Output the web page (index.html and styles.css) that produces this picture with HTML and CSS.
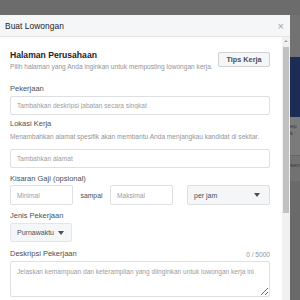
FILE: index.html
```html
<!DOCTYPE html>
<html lang="id">
<head>
<meta charset="utf-8">
<title>Buat Lowongan</title>
<link rel="stylesheet" href="styles.css">
</head>
<body>
<div class="page">
  <div class="topband"></div>
  <div class="main">
    <div class="modal">
      <div class="header">
        <span class="header-title">Buat Lowongan</span>
        <span class="close">×</span>
      </div>
      <div class="body">
        <div class="content">
          <div class="title-row">
            <div class="title-block">
              <div class="title">Halaman Perusahaan</div>
              <div class="subtitle">Pilih halaman yang Anda inginkan untuk memposting lowongan kerja.</div>
            </div>
            <div class="tips-btn">Tips Kerja</div>
          </div>

          <div class="label first">Pekerjaan</div>
          <input class="field" type="text" placeholder="Tambahkan deskripsi jabatan secara singkat">

          <div class="label after-field">Lokasi Kerja</div>
          <div class="hint">Menambahkan alamat spesifik akan membantu Anda menjangkau kandidat di sekitar.</div>
          <input class="field field-loc" type="text" placeholder="Tambahkan alamat">

          <div class="label after-field2">Kisaran Gaji (opsional)</div>
          <div class="salary-row">
            <input class="field small" type="text" placeholder="Minimal">
            <span class="sampai">sampai</span>
            <input class="field small" type="text" placeholder="Maksimal">
            <div class="select">
              <span>per jam</span>
              <span class="caret"></span>
            </div>
          </div>

          <div class="label after-row">Jenis Pekerjaan</div>
          <div class="dropdown-btn">
            <span>Purnawaktu</span>
            <span class="caret"></span>
          </div>

          <div class="desc-head">
            <span class="label-inline">Deskripsi Pekerjaan</span>
            <span class="counter">0 / 5000</span>
          </div>
          <textarea class="textarea" placeholder="Jelaskan kemampuan dan keterampilan yang diinginkan untuk lowongan kerja ini"></textarea>
        </div>
        <div class="scrollbar">
          <div class="sb-arrow"></div>
          <div class="sb-thumb"></div>
        </div>
      </div>
    </div>
    <div class="strip">
      <div class="strip-top"></div>
      <div class="strip-blue"></div>
      <div class="strip-text">
        <span>ep</span>
        <span>k</span>
      </div>
      <div class="strip-mid"><span>sem</span></div>
      <div class="strip-bottom"></div>
    </div>
  </div>
</div>
</body>
</html>
```

FILE: styles.css
```css
* { box-sizing: border-box; }

html, body {
  margin: 0;
  padding: 0;
  width: 300px;
  height: 300px;
  overflow: hidden;
  background: #6d6d6d;
  font-family: "Liberation Sans", Arial, sans-serif;
}

.page {
  display: flex;
  flex-direction: column;
  width: 300px;
  height: 300px;
}

.topband {
  height: 15px;
  flex: none;
  background: #6c6c6c;
}

.main {
  display: flex;
  flex: 1;
  min-height: 0;
}

.modal {
  width: 290px;
  flex: none;
  display: flex;
  flex-direction: column;
  background: #ffffff;
}

.header {
  height: 22px;
  flex: none;
  display: flex;
  align-items: center;
  justify-content: space-between;
  padding: 0 6px 0 5px;
  background: #f5f6f7;
  border-bottom: 1px solid #e5e5e5;
}

.header-title {
  font-size: 8.4px;
  color: #1d2129;
  font-weight: 400;
  letter-spacing: 0.05px;
}

.close {
  font-size: 11px;
  color: #a0a3a8;
  line-height: 1;
  margin-top: 1px;
}

.body {
  flex: 1;
  display: flex;
  min-height: 0;
}

.content {
  flex: 1;
  padding: 0 12px 0 10px;
  display: flex;
  flex-direction: column;
}

.title-row {
  display: flex;
  justify-content: space-between;
  align-items: flex-start;
  margin-top: 12px;
}

.title {
  font-size: 8.6px;
  font-weight: 700;
  line-height: 12px;
  color: #1d2129;
}

.subtitle {
  font-size: 6.6px;
  line-height: 10px;
  color: #90949c;
  margin-top: 1px;
}

.tips-btn {
  margin-top: 3px;
  width: 52px;
  height: 15px;
  display: flex;
  align-items: center;
  justify-content: center;
  background: #f5f6f7;
  border: 1px solid #ced0d4;
  border-radius: 2px;
  font-size: 7.3px;
  font-weight: 700;
  color: #4b4f56;
}

.label, .label-inline {
  font-size: 7.5px;
  line-height: 10px;
  color: #4b4f56;
}

.label.first { margin-top: 12px; }
.label.after-field { margin-top: 4px; }
.label.after-field2 { margin-top: 6px; }
.label.after-row { margin-top: 6px; }

.hint {
  font-size: 6.6px;
  line-height: 10px;
  color: #90949c;
  margin-top: 3px;
}

.field {
  display: block;
  width: 100%;
  height: 19px;
  margin: 2px 0 0 0;
  padding: 0 6px;
  border: 1px solid #dddfe2;
  border-radius: 2px;
  background: #fff;
  font-family: "Liberation Sans", Arial, sans-serif;
  font-size: 6.6px;
  color: #1d2129;
  outline: none;
}

.field-loc { margin-top: 7px; }

.field::placeholder, .textarea::placeholder {
  color: #9a9da3;
  opacity: 1;
}

.salary-row {
  display: flex;
  align-items: center;
  margin-top: 1px;
  height: 20px;
}

.field.small {
  width: 63px;
  flex: none;
  height: 20px;
  margin: 0;
}

.sampai {
  font-size: 6.8px;
  color: #4b4f56;
  width: 37px;
  text-align: center;
  flex: none;
}

.select {
  margin-left: 14px;
  flex: 1;
  height: 20px;
  display: flex;
  align-items: center;
  justify-content: space-between;
  padding: 0 9px 0 6px;
  background: #f5f6f7;
  border: 1px solid #dddfe2;
  border-radius: 2px;
  font-size: 7px;
  color: #4b4f56;
}

.caret {
  width: 0;
  height: 0;
  border-left: 3.5px solid transparent;
  border-right: 3.5px solid transparent;
  border-top: 4px solid #4b4f56;
}

.dropdown-btn {
  margin-top: 2px;
  width: 62px;
  height: 19px;
  display: flex;
  align-items: center;
  gap: 4px;
  padding: 0 6px;
  background: #f5f6f7;
  border: 1px solid #e5e6e9;
  border-radius: 2px;
  font-size: 7px;
  color: #4b4f56;
}

.desc-head {
  display: flex;
  justify-content: space-between;
  align-items: center;
  margin-top: 7px;
  height: 10px;
}

.counter {
  font-size: 6.6px;
  color: #90949c;
}

.textarea {
  display: block;
  margin-top: 2px;
  width: 100%;
  height: 36px;
  padding: 5px 6px;
  border: 1px solid #dddfe2;
  border-radius: 2px;
  font-family: "Liberation Sans", Arial, sans-serif;
  font-size: 6.6px;
  line-height: 9px;
  color: #1d2129;
  outline: none;
}

.scrollbar {
  width: 8px;
  flex: none;
  background: #f1f1f1;
  display: flex;
  flex-direction: column;
  align-items: center;
  padding-top: 3px;
}

.sb-arrow {
  width: 0;
  height: 0;
  border-left: 2px solid transparent;
  border-right: 2px solid transparent;
  border-bottom: 2px solid #a3a3a3;
}

.sb-thumb {
  margin-top: 5px;
  width: 6px;
  height: 166px;
  background: #c1c1c1;
}

.strip {
  flex: 1;
  display: flex;
  flex-direction: column;
  overflow: hidden;
}

.strip-top {
  height: 42px;
  background: #727272;
}

.strip-blue {
  height: 60px;
  background: #1d2c55;
}

.strip-text {
  height: 38px;
  background: #7b7b7b;
  display: flex;
  flex-direction: column;
  padding-top: 6px;
  font-size: 6px;
  line-height: 7px;
  color: #3a3a3a;
}

.strip-mid {
  height: 26px;
  background: #727272;
  border-top: 1px solid #666;
  font-size: 6px;
  color: #3a3a3a;
  padding-top: 6px;
}

.strip-bottom {
  flex: 1;
  background: #6a6a6a;
}
```
